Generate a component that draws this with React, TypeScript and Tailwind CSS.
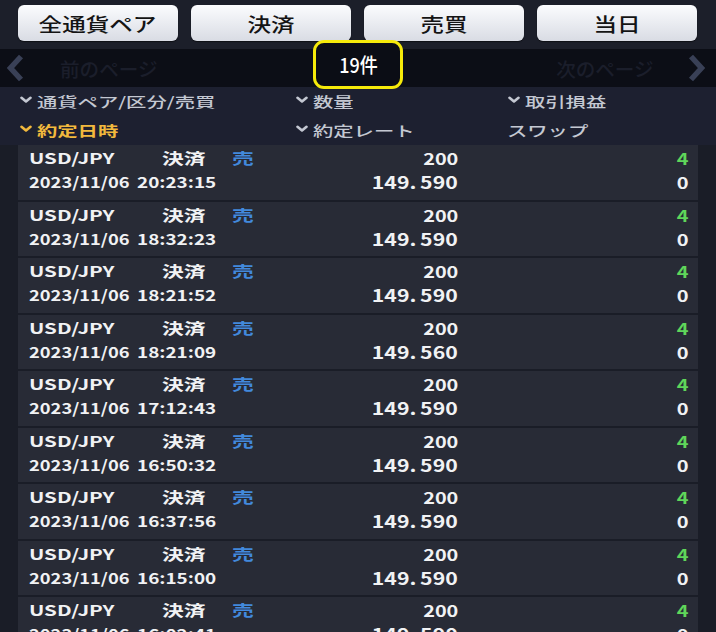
import React from "react";

const rows: [string, string, string, string][] = [
  ["2023/11/06", "20:23:15", "149", "590"],
  ["2023/11/06", "18:32:23", "149", "590"],
  ["2023/11/06", "18:21:52", "149", "590"],
  ["2023/11/06", "18:21:09", "149", "560"],
  ["2023/11/06", "17:12:43", "149", "590"],
  ["2023/11/06", "16:50:32", "149", "590"],
  ["2023/11/06", "16:37:56", "149", "590"],
  ["2023/11/06", "16:15:00", "149", "590"],
  ["2023/11/06", "16:02:41", "149", "590"],
];

function Chev() {
  return (
    <svg width="12" height="8" viewBox="0 0 12 8" className="mr-[5px] shrink-0 -mt-[3px]">
      <path d="M1.5 1.8 L6 5.5 L10.5 1.8" fill="none" stroke="currentColor" strokeWidth="2.6" strokeLinecap="round" strokeLinejoin="round" />
    </svg>
  );
}

function HeadCell({ label, chev = true, active = false }: { label: string; chev?: boolean; active?: boolean }) {
  return (
    <div className={"flex items-center h-[27px] " + (active ? "text-[#f2b93d]" : "text-[#c4c8d2]")}>
      {chev && <Chev />}
      <span className={"inline-block origin-left scale-x-[1.45] text-[14px] leading-[27px] " + (active ? "font-bold" : "font-medium")}>{label}</span>
    </div>
  );
}

function Btn({ label }: { label: string }) {
  return (
    <div className="w-[160px] h-[36px] rounded-[6px] bg-gradient-to-b from-[#fbfcfe] to-[#d9dce4] shadow-[0_1px_1px_rgba(0,0,0,0.5)] flex items-center justify-center">
      <span className="inline-block scale-x-[1.24] text-[19px] font-medium text-[#141414] leading-none">{label}</span>
    </div>
  );
}

export default function App() {
  return (
    <div className="w-[716px] h-[632px] overflow-hidden bg-[#1c1f2a] font-['Noto_Sans_CJK_JP',sans-serif]">
      <div className="h-[49px] pt-[5px] pl-[18px] flex gap-[13px]">
        <Btn label="全通貨ペア" />
        <Btn label="決済" />
        <Btn label="売買" />
        <Btn label="当日" />
      </div>

      <div className="relative h-[38px] bg-[#0c0e16] flex items-center">
        <svg width="18" height="28" viewBox="0 0 18 28" className="ml-[6px]">
          <polyline points="15,2.5 4.5,14 15,25.5" fill="none" stroke="#394056" strokeWidth="5.5" strokeLinejoin="miter" />
        </svg>
        <span className="ml-[36px] inline-block origin-left scale-x-[1.03] text-[19px] text-[#1b1e2b] font-medium leading-none">前のページ</span>
        <div className="flex-1" />
        <span className="mr-[34px] inline-block origin-right scale-x-[1.03] text-[19px] text-[#1b1e2b] font-medium leading-none">次のページ</span>
        <svg width="18" height="28" viewBox="0 0 18 28" className="mr-[10px]">
          <polyline points="3,2.5 13.5,14 3,25.5" fill="none" stroke="#394056" strokeWidth="5.5" strokeLinejoin="miter" />
        </svg>
        <div className="absolute left-[313px] top-[-9px] w-[90px] h-[49px] rounded-[11px] border-[3px] border-[#f6ea0a] bg-[#0b0d15] flex items-center justify-center">
          <span className="inline-block scale-x-[0.9] text-white text-[20px] font-medium leading-none">19件</span>
        </div>
      </div>

      <div className="h-[58px] bg-[#1d2030] pt-[1px] pl-[20px] grid grid-cols-[276px_212px_1fr]">
        <HeadCell label="通貨ペア/区分/売買" />
        <HeadCell label="数量" />
        <HeadCell label="取引損益" />
        <HeadCell label="約定日時" active />
        <HeadCell label="約定レート" />
        <div className="-ml-[1px]">
          <HeadCell label="スワップ" chev={false} />
        </div>
      </div>

      <div className="flex flex-col gap-[2px] pl-[18px] pr-[18px] bg-[#1a1d27]">
        {rows.map(([d, t, a, b], i) => (
          <div key={i} className="h-[54.5px] bg-[#282b36] pl-[11px] pr-[10px] grid grid-cols-[133px_70px_60px_166px_1fr] grid-rows-[26px_22px] text-[#f1f2f4] font-bold">
            <div className="leading-[26px] text-[15px]">
              <span className="inline-block origin-left scale-x-[1.37]">USD/JPY</span>
            </div>
            <div className="leading-[26px] text-[15px]">
              <span className="inline-block origin-left scale-x-[1.45]">決済</span>
            </div>
            <div className="leading-[26px] text-[15px] text-[#4289dc]">
              <span className="inline-block origin-left scale-x-[1.45]">売</span>
            </div>
            <div className="leading-[26px] text-[16px] text-right">
              <span className="inline-block origin-right scale-x-[1.24]">200</span>
            </div>
            <div className="leading-[26px] text-[16px] text-right text-[#5fd65a]">
              <span className="inline-block origin-right scale-x-[1.25]">4</span>
            </div>

            <div className="col-span-3 leading-[22px] text-[15px] whitespace-nowrap flex">
              <span className="w-[108px] shrink-0">
                <span className="inline-block origin-left scale-x-[1.22]">{d}</span>
              </span>
              <span className="inline-block origin-left scale-x-[1.26]">{t}</span>
            </div>
            <div className="leading-[22px] text-[17px] text-right">
              <span className="inline-block origin-right scale-x-[1.25]">
                {a}
                <span className="mr-[3px]">.</span>
                {b}
              </span>
            </div>
            <div className="leading-[22px] text-[16px] text-right">
              <span className="inline-block origin-right scale-x-[1.25]">0</span>
            </div>
          </div>
        ))}
      </div>
    </div>
  );
}
